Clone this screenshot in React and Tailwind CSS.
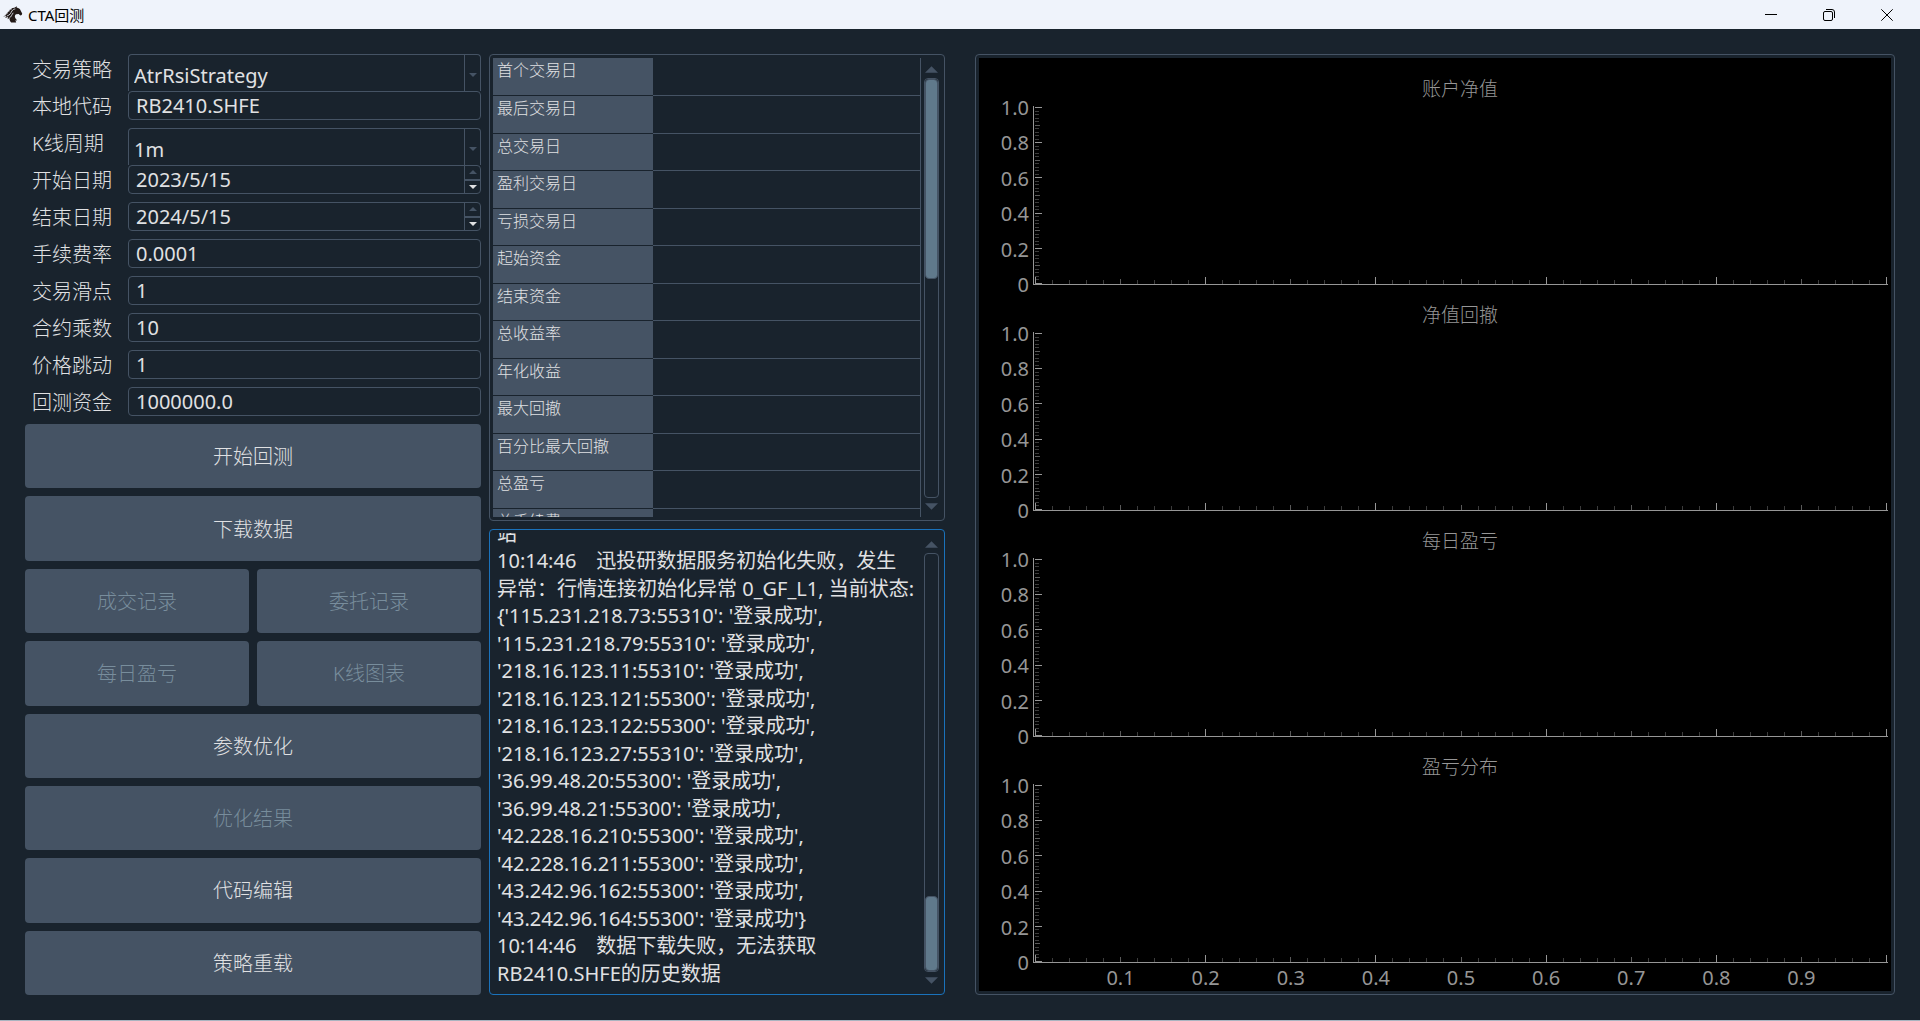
import { useEffect, useRef, useState } from "react";

const STATS = [
  "首个交易日",
  "最后交易日",
  "总交易日",
  "盈利交易日",
  "亏损交易日",
  "起始资金",
  "结束资金",
  "总收益率",
  "年化收益",
  "最大回撤",
  "百分比最大回撤",
  "总盈亏",
  "总手续费",
];

const LOG_LINES = [
  "站",
  "10:14:46\u3000迅投研数据服务初始化失败，发生",
  "异常：行情连接初始化异常 0_GF_L1, 当前状态:",
  "{'115.231.218.73:55310': '登录成功',",
  "'115.231.218.79:55310': '登录成功',",
  "'218.16.123.11:55310': '登录成功',",
  "'218.16.123.121:55300': '登录成功',",
  "'218.16.123.122:55300': '登录成功',",
  "'218.16.123.27:55310': '登录成功',",
  "'36.99.48.20:55300': '登录成功',",
  "'36.99.48.21:55300': '登录成功',",
  "'42.228.16.210:55300': '登录成功',",
  "'42.228.16.211:55300': '登录成功',",
  "'43.242.96.162:55300': '登录成功',",
  "'43.242.96.164:55300': '登录成功'}",
  "10:14:46\u3000数据下载失败，无法获取",
  "RB2410.SHFE的历史数据",
];

const CHARTS = ["账户净值", "净值回撤", "每日盈亏", "盈亏分布"];
const Y_LABELS = ["1.0", "0.8", "0.6", "0.4", "0.2", "0"];
const X_LABELS = ["0.1", "0.2", "0.3", "0.4", "0.5", "0.6", "0.7", "0.8", "0.9"];

function Triangle({ down, className }) {
  return (
    <svg viewBox="0 0 14 7" className={className} fill="currentColor" aria-hidden="true">
      <path d={down ? "M0 0h14L7 7z" : "M0 7h14L7 0z"} />
    </svg>
  );
}

function TitleBar() {
  return (
    <header className="flex h-[29px] shrink-0 items-center bg-[#eff3fb] pr-1 text-black">
      <svg viewBox="0 0 20 17" className="ml-[3px] h-[17px] w-5" aria-hidden="true">
        <path
          fill="#231a18"
          d="M14 .3 13.600 1.600C15.600 2 17 3 17.600 4.400L19.200 7.400 18.700 9 17.300 9.400 15.700 8 13 8.300C11.700 9.400 11.500 10.700 12.400 12.300L14.200 14.600 12.400 14.200 13.200 16.400H8.200C6.900 15.200 6.300 13.600 6.500 12L4.500 13.200 5.200 10.900 2.100 12 3.600 10 0 10.400 3.800 8.700 2.400 8.300 5.300 6.900 4.200 6.300 6.900 5.100 6.200 4.100 8.900 3.300 8.500 2.200 11.300 1.700z"
        />
        <path
          fill="none"
          stroke="#eff3fb"
          strokeWidth=".8"
          d="M4 10C7.300 9 7.900 6.500 8.900 5S10.900 3.200 12.300 2.900M6.300 12C8.300 11 8.700 8.700 10.200 6.800"
        />
      </svg>
      <h1 className="ml-[5px] flex-1 text-[15px] leading-5">CTA回测</h1>
      <button aria-label="最小化" className="flex h-full w-[58px] items-center justify-center">
        <svg viewBox="0 0 12 12" className="h-3 w-3" stroke="currentColor" shapeRendering="crispEdges">
          <path d="M0 5.500h12" />
        </svg>
      </button>
      <button aria-label="还原" className="flex h-full w-[58px] items-center justify-center">
        <svg viewBox="0 0 12 12" className="h-3 w-3" fill="none" stroke="currentColor">
          <rect x=".5" y="2.500" width="9" height="9" rx="1.500" />
          <path d="M3 .5h6a2.500 2.500 0 0 1 2.500 2.500v6" />
        </svg>
      </button>
      <button aria-label="关闭" className="flex h-full w-[58px] items-center justify-center">
        <svg viewBox="0 0 12 12" className="h-3 w-3" stroke="currentColor">
          <path d="M.3.300l11.400 11.400M11.700.300.300 11.700" />
        </svg>
      </button>
    </header>
  );
}

function FormRow({ id, label, children }) {
  return (
    <div className="flex h-[37px] items-start">
      <label htmlFor={id} className="w-[103px] shrink-0 pl-[7px] leading-8 font-light">
        {label}
      </label>
      {children}
    </div>
  );
}

function ComboBox({ id, label, options }) {
  const [value, setValue] = useState(options[0]);
  return (
    <FormRow id={id} label={label}>
      <div className="flex h-[37px] min-w-0 flex-1 rounded-t border border-b-0 border-[#455364]">
        <select
          id={id}
          value={value}
          onChange={(e) => setValue(e.target.value)}
          className="min-w-0 flex-1 appearance-none bg-transparent pt-[6px] pl-[5px] outline-none"
        >
          {options.map((o) => (
            <option key={o}>{o}</option>
          ))}
        </select>
        <span className="flex w-4 items-center justify-center border-l border-[#455364] pt-1">
          <Triangle down className="h-1 w-2 text-[#455364]" />
        </span>
      </div>
    </FormRow>
  );
}

function TextBox({ id, label, initial }) {
  const [value, setValue] = useState(initial);
  return (
    <FormRow id={id} label={label}>
      <input
        id={id}
        value={value}
        onChange={(e) => setValue(e.target.value)}
        className="h-[29px] min-w-0 flex-1 rounded border border-[#455364] bg-transparent px-[7px] outline-none"
      />
    </FormRow>
  );
}

function DateBox({ id, label, initial }) {
  const [value, setValue] = useState(initial);

  const step = (days) => {
    const d = new Date(value);
    if (isNaN(d)) return;
    d.setDate(d.getDate() + days);
    setValue(`${d.getFullYear()}/${d.getMonth() + 1}/${d.getDate()}`);
  };

  return (
    <FormRow id={id} label={label}>
      <div className="flex h-[29px] min-w-0 flex-1 rounded border border-[#455364]">
        <input
          id={id}
          value={value}
          onChange={(e) => setValue(e.target.value)}
          className="min-w-0 flex-1 bg-transparent px-[7px] outline-none"
        />
        <div className="flex w-4 flex-col border-l border-[#455364]">
          <button
            aria-label={`${label} +`}
            onClick={() => step(1)}
            className="flex flex-1 items-center justify-center border-b-2 border-[#455364] text-[#455364]"
          >
            <Triangle className="h-1 w-2" />
          </button>
          <button
            aria-label={`${label} -`}
            onClick={() => step(-1)}
            className="flex flex-1 items-center justify-center"
          >
            <Triangle down className="h-1 w-2" />
          </button>
        </div>
      </div>
    </FormRow>
  );
}

function ActionButton({ children, disabled, wide }) {
  return (
    <button
      disabled={disabled}
      className={`rounded bg-[#455364] pt-[2px] font-light hover:bg-[#54687a] disabled:bg-[#455364] disabled:text-[#788d9c] ${wide ? "col-span-2" : ""}`}
    >
      {children}
    </button>
  );
}

// start and size are fractions of the track
function ScrollBar({ start, size }) {
  return (
    <div className="flex w-[15px] shrink-0 flex-col items-center pt-2 pb-[7px] text-[#455364]">
      <Triangle className="h-[7px] w-[13px]" />
      <div className="my-[5px] w-full flex-1 rounded border border-[#455364]">
        <div className="h-full">
          <div style={{ height: `${start * 100}%` }} />
          <div
            className="rounded border border-[#455364] bg-[#60798b]"
            style={{ height: `${size * 100}%` }}
          />
        </div>
      </div>
      <Triangle down className="h-[7px] w-[13px]" />
    </div>
  );
}

function StatsTable() {
  return (
    <section className="flex min-h-0 flex-1 rounded border border-[#455364] p-[3px]">
      <div className="min-w-0 flex-1 overflow-hidden border-r border-[#455364]">
        <table className="w-full border-collapse text-[16px] leading-6">
          <tbody>
            {STATS.map((name) => (
              <tr key={name} className="odd:h-[37px] even:h-[38px]">
                <th
                  scope="row"
                  className="w-40 border-b border-[#19232d] bg-[#455364] p-0 pl-1 text-left align-top font-light"
                >
                  {name}
                </th>
                <td className="border-b border-[#455364] p-0" />
              </tr>
            ))}
          </tbody>
        </table>
      </div>
      <div className="flex pr-[2px] pl-[3px]">
        <ScrollBar start={0} size={0.48} />
      </div>
    </section>
  );
}

function LogPanel() {
  const box = useRef(null);

  // keep the newest line in view
  useEffect(() => {
    box.current.scrollTop = box.current.scrollHeight;
  }, []);

  return (
    <section className="flex min-h-0 flex-1 rounded border border-[#1a72bb] p-[3px]">
      <div ref={box} className="min-w-0 flex-1 overflow-hidden pb-[5px] pl-1 whitespace-nowrap">
        {LOG_LINES.map((line, i) => (
          <p key={i} className="odd:leading-[27px] even:leading-[28px]">
            {line}
          </p>
        ))}
      </div>
      <div className="flex pr-[2px] pl-[3px]">
        <ScrollBar start={0.82} size={0.18} />
      </div>
    </section>
  );
}

function tickStyle(i, major, mid) {
  if (i % major === 0) return { len: 7, color: "#969696" };
  if (i % mid === 0) return { len: 5, color: "#5a5a5a" };
  return { len: 4, color: "#3c3c3c" };
}

function Axes() {
  const ticks = Array.from({ length: 51 }, (_, i) => i);
  return (
    <svg
      viewBox="0 0 855 179"
      preserveAspectRatio="none"
      className="h-full min-w-0 flex-1"
      shapeRendering="crispEdges"
      aria-hidden="true"
    >
      {ticks.map((i) => {
        const t = tickStyle(i, 10, 5);
        const y = Math.round(177 - i * 3.52) + 0.5;
        return <path key={`y${i}`} d={`M2 ${y}h${t.len}`} stroke={t.color} />;
      })}
      {ticks.map((i) => {
        const t = tickStyle(i, 10, 5);
        const x = Math.round(2 + i * 17.02) + 0.5;
        return <path key={`x${i}`} d={`M${x} 178v-${t.len}`} stroke={t.color} />;
      })}
      <path d="M.5 0V178.500H855" fill="none" stroke="#969696" />
    </svg>
  );
}

function Chart({ title, last }) {
  return (
    <figure className={`flex min-h-0 flex-col ${last ? "flex-[1_1_28px]" : "flex-[1_1_0px]"}`}>
      <figcaption className="h-[47px] shrink-0 pt-4 pl-[50px] text-center text-[19px] leading-7 font-light">
        {title}
      </figcaption>
      <div className="flex min-h-0 flex-1 pr-[3px]">
        <div className="-mt-[10px] -mb-[12px] flex w-[54px] shrink-0 flex-col justify-between pr-1 text-right leading-6">
          {Y_LABELS.map((y) => (
            <span key={y}>{y}</span>
          ))}
        </div>
        <Axes />
      </div>
      {last && (
        <div className="mr-[47px] ml-[99px] grid h-7 shrink-0 grid-cols-9 pt-px text-center leading-7">
          {X_LABELS.map((x) => (
            <span key={x}>{x}</span>
          ))}
        </div>
      )}
    </figure>
  );
}

export default function App() {
  return (
    <div className="flex h-screen flex-col border-b border-[#a9b4c0] bg-[#19232d] font-['Noto_Sans','Noto_Sans_CJK_SC',sans-serif] text-[20px] text-[#e0e1e3]">
      <TitleBar />
      <main className="grid min-h-0 flex-1 grid-cols-[456px_456px_1fr] gap-2 p-[25px]">
        <div className="flex min-h-0 flex-col">
          <form onSubmit={(e) => e.preventDefault()}>
            <ComboBox id="strategy" label="交易策略" options={["AtrRsiStrategy"]} />
            <TextBox id="symbol" label="本地代码" initial="RB2410.SHFE" />
            <ComboBox id="interval" label="K线周期" options={["1m", "1h", "d", "w"]} />
            <DateBox id="start" label="开始日期" initial="2023/5/15" />
            <DateBox id="end" label="结束日期" initial="2024/5/15" />
            <TextBox id="rate" label="手续费率" initial="0.0001" />
            <TextBox id="slippage" label="交易滑点" initial="1" />
            <TextBox id="size" label="合约乘数" initial="10" />
            <TextBox id="pricetick" label="价格跳动" initial="1" />
            <TextBox id="capital" label="回测资金" initial="1000000.0" />
          </form>
          <div className="grid min-h-0 flex-1 auto-rows-fr grid-cols-2 gap-2">
            <ActionButton wide>开始回测</ActionButton>
            <ActionButton wide>下载数据</ActionButton>
            <ActionButton disabled>成交记录</ActionButton>
            <ActionButton disabled>委托记录</ActionButton>
            <ActionButton disabled>每日盈亏</ActionButton>
            <ActionButton disabled>K线图表</ActionButton>
            <ActionButton wide>参数优化</ActionButton>
            <ActionButton wide disabled>
              优化结果
            </ActionButton>
            <ActionButton wide>代码编辑</ActionButton>
            <ActionButton wide>策略重载</ActionButton>
          </div>
        </div>

        <div className="flex min-h-0 flex-col gap-2">
          <StatsTable />
          <LogPanel />
        </div>

        <div className="ml-[22px] flex min-h-0 rounded border border-[#455364] p-[3px]">
          <div className="flex min-w-0 flex-1 flex-col bg-black pt-px text-[#969696]">
            {CHARTS.map((title, i) => (
              <Chart key={title} title={title} last={i === CHARTS.length - 1} />
            ))}
          </div>
        </div>
      </main>
    </div>
  );
}
